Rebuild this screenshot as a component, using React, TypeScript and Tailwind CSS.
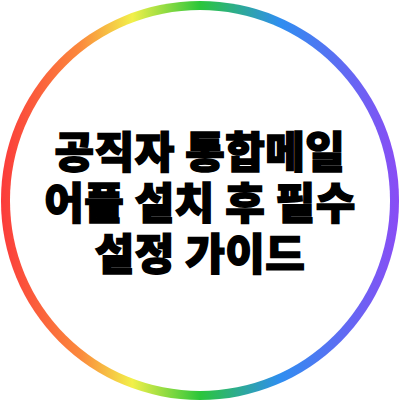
export default function App() {
  return (
    <div className="w-[400px] h-[400px] bg-white flex items-center justify-center">
      <div className="w-[398px] h-[399px] rounded-full p-[9px] bg-[linear-gradient(to_right,#fb3b3b,#fb8a3c_20%,#f2f04a_33%,#2bc63a_50%,#2f8ef0_70%,#8a4cf5)]">
        <div className="w-full h-full rounded-full bg-white flex items-center justify-center">
          <h1 className="text-center text-black font-black text-[43px] leading-[51px] tracking-[0.5px] [-webkit-text-stroke:1.5px_black] font-['Noto_Sans_CJK_KR',sans-serif]">
            공직자 통합메일
            <br />
            어플 설치 후 필수
            <br />
            설정 가이드
          </h1>
        </div>
      </div>
    </div>
  )
}
